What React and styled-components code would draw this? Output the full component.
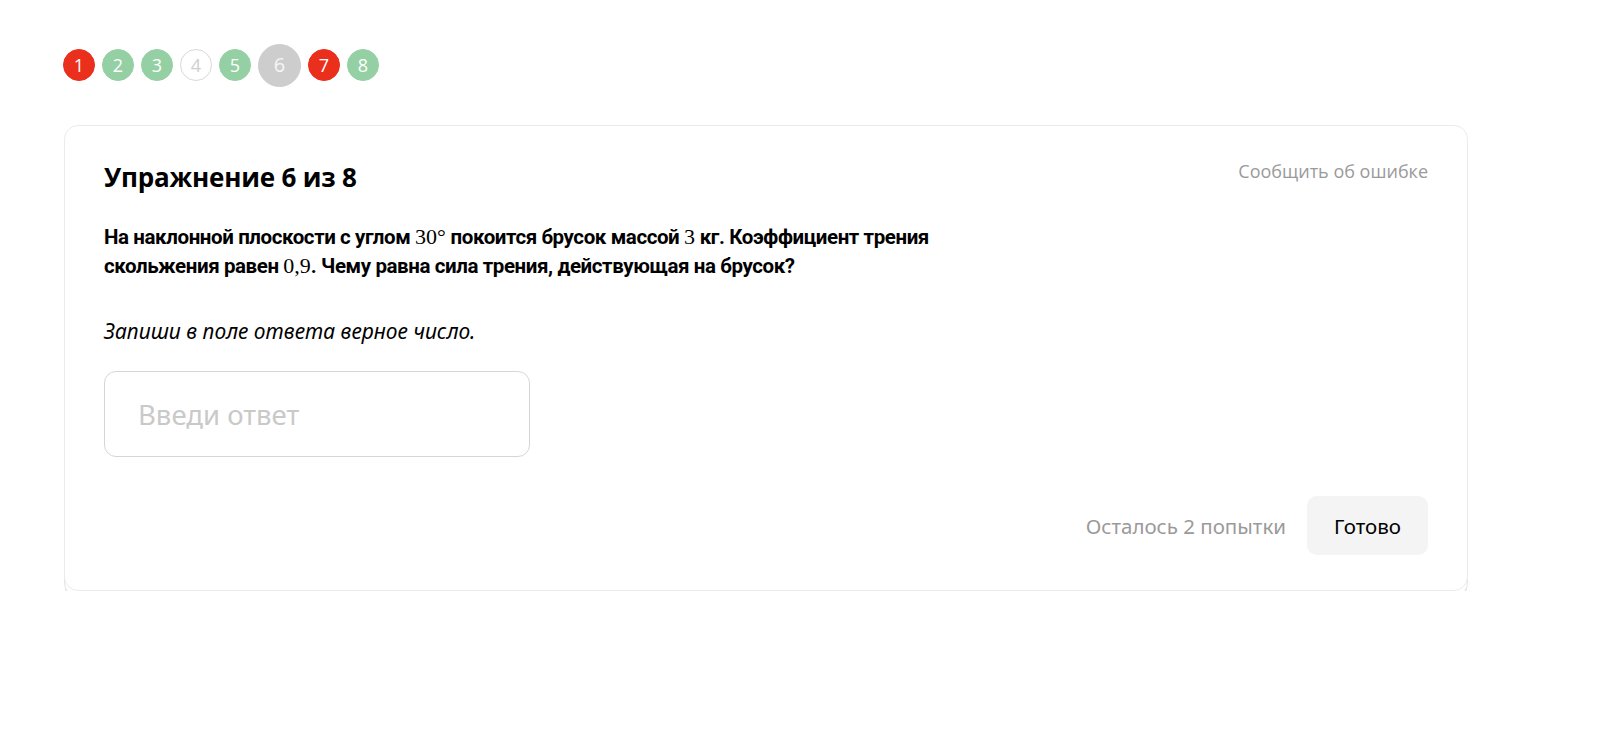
import React from 'react';
import styled, { createGlobalStyle } from 'styled-components';

const GlobalStyle = createGlobalStyle`
  html, body {
    margin: 0;
    padding: 0;
    background: #fff;
    font-family: "Noto Sans", "Open Sans", sans-serif;
    color: #000;
  }
  * { box-sizing: border-box; }
`;

const Page = styled.div`
  padding: 43px 0 0 63px;
  width: 1468px;
`;

const Steps = styled.div`
  display: flex;
  align-items: center;
  gap: 7px;
  height: 44px;
  margin-bottom: 38px;
`;

const palette = {
  wrong: { bg: '#ea2f1c', fg: '#fff', border: '#ea2f1c' },
  right: { bg: '#94d0a3', fg: '#fff', border: '#94d0a3' },
  empty: { bg: '#fff', fg: '#cfcfcf', border: '#d9d9d9' },
  current: { bg: '#cdcdcd', fg: '#f6f6f6', border: '#cdcdcd' },
};

const Step = styled.div`
  width: ${({ $current }) => ($current ? '43px' : '32px')};
  height: ${({ $current }) => ($current ? '43px' : '32px')};
  border-radius: 50%;
  display: flex;
  align-items: center;
  justify-content: center;
  background: ${({ $kind }) => palette[$kind].bg};
  color: ${({ $kind }) => palette[$kind].fg};
  border: 1px solid ${({ $kind }) => palette[$kind].border};
  font-family: "Open Sans", "Noto Sans", sans-serif;
  font-size: ${({ $current }) => ($current ? '20px' : '18px')};
  line-height: 1;
`;

const Card = styled.div`
  width: 1404px;
  margin-left: 1px;
  background: #fff;
  border: 1px solid #ebebeb;
  border-radius: 14px;
  padding: 35px 39px 35px 39px;
  box-shadow:
    0 6px 0 -1px #fff,
    0 6px 0 0 #e6e6e6,
    0 11px 0 -2px #fff,
    0 11px 0 -1px #e8e8e8;
`;

const Header = styled.div`
  display: flex;
  justify-content: space-between;
  align-items: flex-start;
`;

const Title = styled.h2`
  margin: 0;
  font-family: "Open Sans", "Noto Sans", sans-serif;
  font-size: 26px;
  font-weight: 700;
  line-height: 32px;
  letter-spacing: -0.2px;
`;

const Report = styled.a`
  font-family: "Open Sans", "Noto Sans", sans-serif;
  font-size: 18px;
  color: #9a9a9a;
  line-height: 22px;
  margin-top: -1px;
  cursor: pointer;
`;

const Question = styled.p`
  margin: 30px 0 0;
  max-width: 850px;
  font-family: "Roboto", "Noto Sans", sans-serif;
  font-weight: 700;
  font-size: 20.5px;
  line-height: 29px;
  letter-spacing: -0.4px;
`;

const Math = styled.span`
  font-family: "Liberation Serif", "DejaVu Serif", serif;
  font-weight: 400;
  font-size: 22px;
  line-height: 1;
  letter-spacing: 0;
`;

const Hint = styled.p`
  margin: 38px 0 0;
  font-family: "Noto Sans", "Open Sans", sans-serif;
  font-style: italic;
  font-size: 21px;
  line-height: 24px;
`;

const AnswerInput = styled.input`
  display: block;
  margin-top: 28px;
  width: 426px;
  height: 86px;
  border: 1px solid #d6d6d6;
  border-radius: 12px;
  padding: 0 33px;
  font-family: "Noto Sans", "Open Sans", sans-serif;
  font-size: 27.5px;
  outline: none;
  &::placeholder { color: #c9c9c9; }
`;

const Footer = styled.div`
  display: flex;
  justify-content: flex-end;
  align-items: center;
  gap: 21px;
  margin-top: 39px;
`;

const Attempts = styled.span`
  font-family: "Noto Sans", "Open Sans", sans-serif;
  font-size: 20.5px;
  color: #9a9a9a;
`;

const DoneButton = styled.button`
  width: 121px;
  height: 59px;
  border: none;
  border-radius: 10px;
  background: #f4f4f4;
  font-family: "Noto Sans", "Open Sans", sans-serif;
  font-size: 20.5px;
  color: #000;
  cursor: pointer;
`;

const steps = [
  { n: 1, kind: 'wrong' },
  { n: 2, kind: 'right' },
  { n: 3, kind: 'right' },
  { n: 4, kind: 'empty' },
  { n: 5, kind: 'right' },
  { n: 6, kind: 'current', current: true },
  { n: 7, kind: 'wrong' },
  { n: 8, kind: 'right' },
];

export default function App() {
  return (
    <>
      <GlobalStyle />
      <Page>
        <Steps>
          {steps.map((s) => (
            <Step key={s.n} $kind={s.kind} $current={s.current}>
              {s.n}
            </Step>
          ))}
        </Steps>
        <Card>
          <Header>
            <Title>Упражнение 6 из 8</Title>
            <Report>Сообщить об ошибке</Report>
          </Header>
          <Question>
            На наклонной плоскости с углом <Math>30°</Math> покоится брусок массой <Math>3</Math> кг.
            Коэффициент трения скольжения равен <Math>0,9</Math>. Чему равна сила трения, действующая на брусок?
          </Question>
          <Hint>Запиши в поле ответа верное число.</Hint>
          <AnswerInput placeholder="Введи ответ" />
          <Footer>
            <Attempts>Осталось 2 попытки</Attempts>
            <DoneButton>Готово</DoneButton>
          </Footer>
        </Card>
      </Page>
    </>
  );
}
